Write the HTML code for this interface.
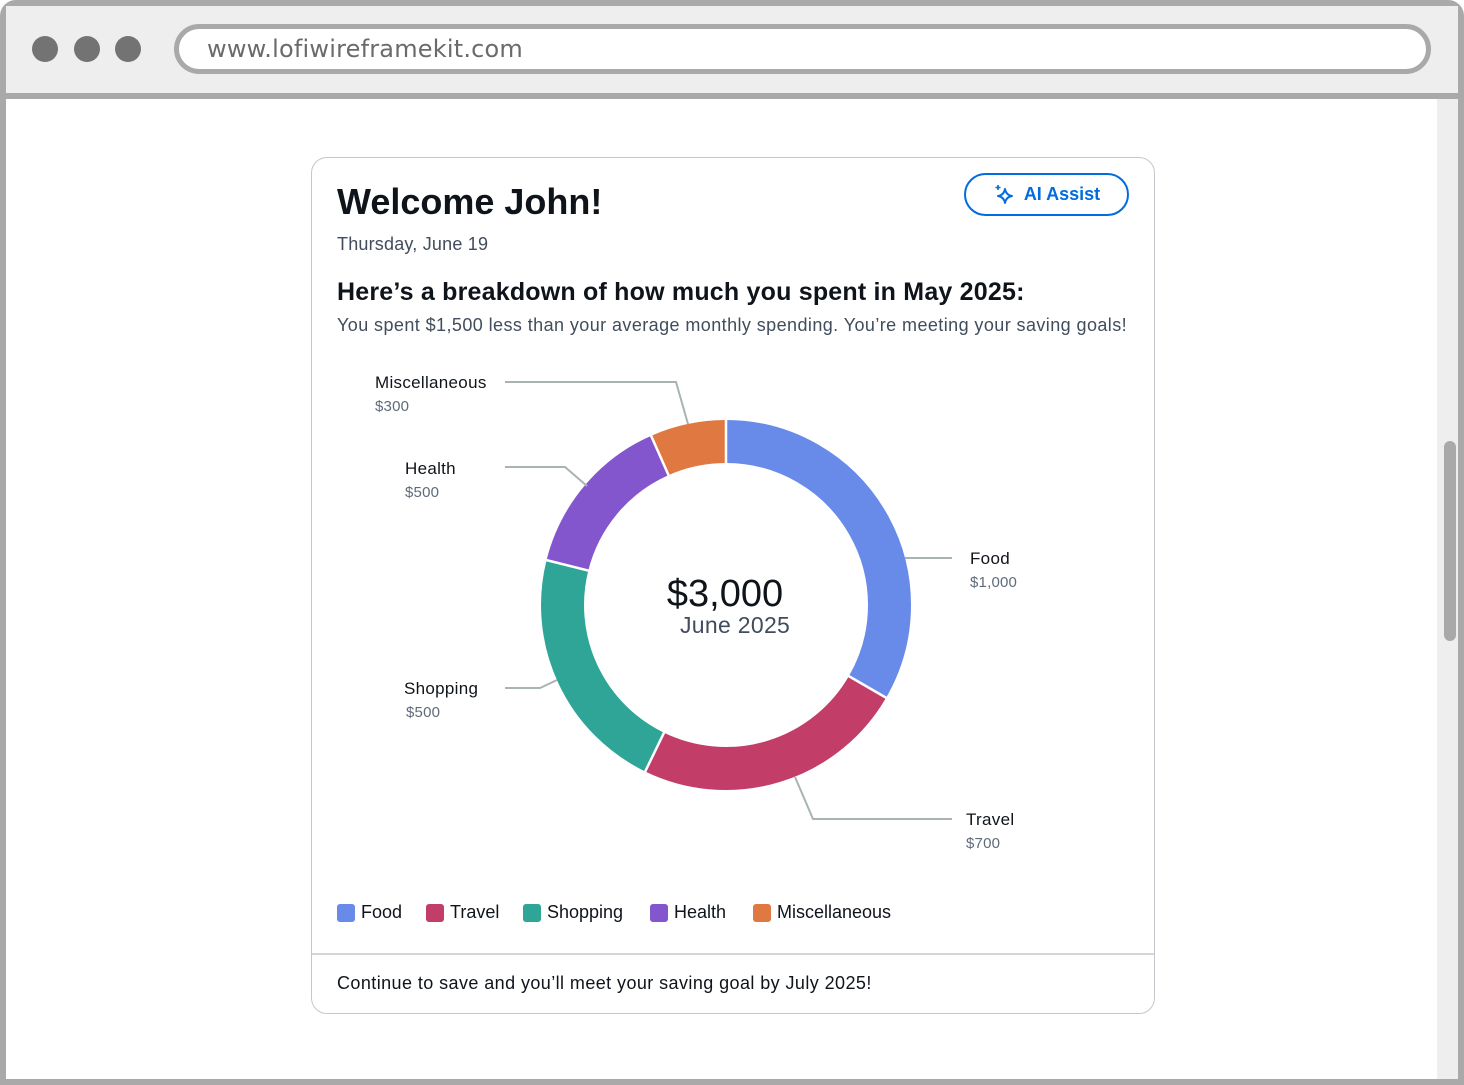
<!DOCTYPE html>
<html><head><meta charset="utf-8">
<style>
*{margin:0;padding:0;box-sizing:border-box}
html,body{width:1464px;height:1085px;overflow:hidden;background:#fff;font-family:"Liberation Sans",sans-serif;color:#0f141a}
.abs{position:absolute}
.frame{left:0;top:0;width:1464px;height:1085px;border:6px solid #a9a9a9;border-radius:16px 16px 0 0;}
.top{left:6px;top:6px;width:1452px;height:93px;background:#eeeeee;border-bottom:6px solid #a9a9a9}
.dot{width:26px;height:26px;border-radius:50%;background:#737373;top:36px}
.url{left:174px;top:24px;width:1257px;height:50px;border:5px solid #a9a9a9;border-radius:25px;background:#fff;font-family:"DejaVu Sans",sans-serif;font-size:24px;color:#6a6a6a;padding-left:28px;line-height:40px;letter-spacing:0.2px}
.sb{left:1437px;top:99px;width:21px;height:980px;background:#eeeeee}
.thumb{left:1444px;top:441px;width:12px;height:200px;background:#a9a9a9;border-radius:6px}
.card{left:311px;top:157px;width:844px;height:857px;border:1px solid #c6c6cd;border-radius:16px}
.lbl{font-size:17px;color:#0f141a;letter-spacing:0.3px}
.val{font-size:15px;color:#5f6b7a;letter-spacing:0.2px}
.leg{top:902px;font-size:18px;color:#0f141a;display:flex;align-items:center;gap:6px}
.sq{width:18px;height:18px;border-radius:3px;display:inline-block}
</style></head><body>
<div class="abs frame"></div>
<div class="abs top"></div>
<div class="abs dot" style="left:32px"></div>
<div class="abs dot" style="left:74px"></div>
<div class="abs dot" style="left:115px"></div>
<div class="abs url">www.lofiwireframekit.com</div>
<div class="abs sb"></div>
<div class="abs thumb"></div>

<div class="abs card"></div>
<div class="abs" style="left:337px;top:181px;font-size:36px;font-weight:bold;color:#0f141a">Welcome John!</div>
<div class="abs" style="left:337px;top:234px;font-size:18px;color:#414d5c;letter-spacing:0.2px">Thursday, June 19</div>
<div class="abs" style="left:337px;top:278px;font-size:25px;font-weight:bold;letter-spacing:0.2px">Here’s a breakdown of how much you spent in May 2025:</div>
<div class="abs" style="left:337px;top:315px;font-size:18px;color:#414d5c;letter-spacing:0.42px">You spent $1,500 less than your average monthly spending. You’re meeting your saving goals!</div>

<div class="abs" style="left:964px;top:173px;width:165px;height:43px;border:2px solid #006ce0;border-radius:22px;color:#006ce0;font-weight:bold;font-size:18px;display:flex;align-items:center;justify-content:center;gap:9px">
<svg width="22" height="22" viewBox="0 0 22 22"><path d="M12 5 Q13 11 19 12 Q13 13 12 19 Q11 13 5 12 Q11 11 12 5Z" fill="none" stroke="#006ce0" stroke-width="2" stroke-linejoin="round"/><path d="M5 1v5M2.5 3.5h5" stroke="#006ce0" stroke-width="1.6"/></svg>AI Assist</div>

<svg class="abs" style="left:0;top:0" width="1464" height="1085">
<g fill="none" stroke-width="43">
<path d="M726 441.5 A163.5 163.5 0 0 1 867.6 686.75" stroke="#688ae8"/>
<path d="M867.6 686.75 A163.5 163.5 0 0 1 654.4 752" stroke="#c33d69"/>
<path d="M654.4 752 A163.5 163.5 0 0 1 567.4 565.4" stroke="#2ea597"/>
<path d="M567.4 565.4 A163.5 163.5 0 0 1 659.5 455.6" stroke="#8456ce"/>
<path d="M659.5 455.6 A163.5 163.5 0 0 1 726 441.5" stroke="#e07941"/>
</g>
<g stroke="#fff" stroke-width="2.5">
<line x1="726" y1="605" x2="726" y2="415"/>
<line x1="726" y1="605" x2="890" y2="700"/>
<line x1="726" y1="605" x2="643" y2="776"/>
<line x1="726" y1="605" x2="542" y2="559"/>
<line x1="726" y1="605" x2="649" y2="431"/>
</g>
<g fill="none" stroke="#a9b3b3" stroke-width="2">
<polyline points="505,382 676,382 688,424"/>
<polyline points="505,467 565,467 587,486"/>
<polyline points="905,558 952,558"/>
<polyline points="505,688 540,688 557,680"/>
<polyline points="795,777 813,819 952,819"/>
</g>
<line x1="312" y1="954" x2="1154" y2="954" stroke="#c6c6cd" stroke-width="1.5"/>
</svg>

<div class="abs" style="left:600px;top:573px;width:250px;text-align:center;font-size:38px;line-height:42px">$3,000</div>
<div class="abs" style="left:680px;top:612px;font-size:23px;color:#414d5c;letter-spacing:0.3px">June 2025</div>

<div class="abs lbl" style="left:375px;top:373px">Miscellaneous</div>
<div class="abs val" style="left:375px;top:398px">$300</div>
<div class="abs lbl" style="left:405px;top:459px">Health</div>
<div class="abs val" style="left:405px;top:484px">$500</div>
<div class="abs lbl" style="left:970px;top:549px">Food</div>
<div class="abs val" style="left:970px;top:574px">$1,000</div>
<div class="abs lbl" style="left:404px;top:679px">Shopping</div>
<div class="abs val" style="left:406px;top:704px">$500</div>
<div class="abs lbl" style="left:966px;top:810px">Travel</div>
<div class="abs val" style="left:966px;top:835px">$700</div>

<div class="abs leg" style="left:337px"><span class="sq" style="background:#688ae8"></span>Food</div>
<div class="abs leg" style="left:426px"><span class="sq" style="background:#c33d69"></span>Travel</div>
<div class="abs leg" style="left:523px"><span class="sq" style="background:#2ea597"></span>Shopping</div>
<div class="abs leg" style="left:650px"><span class="sq" style="background:#8456ce"></span>Health</div>
<div class="abs leg" style="left:753px"><span class="sq" style="background:#e07941"></span>Miscellaneous</div>

<div class="abs" style="left:337px;top:973px;font-size:18px;letter-spacing:0.42px">Continue to save and you’ll meet your saving goal by July 2025!</div>
</body></html>
